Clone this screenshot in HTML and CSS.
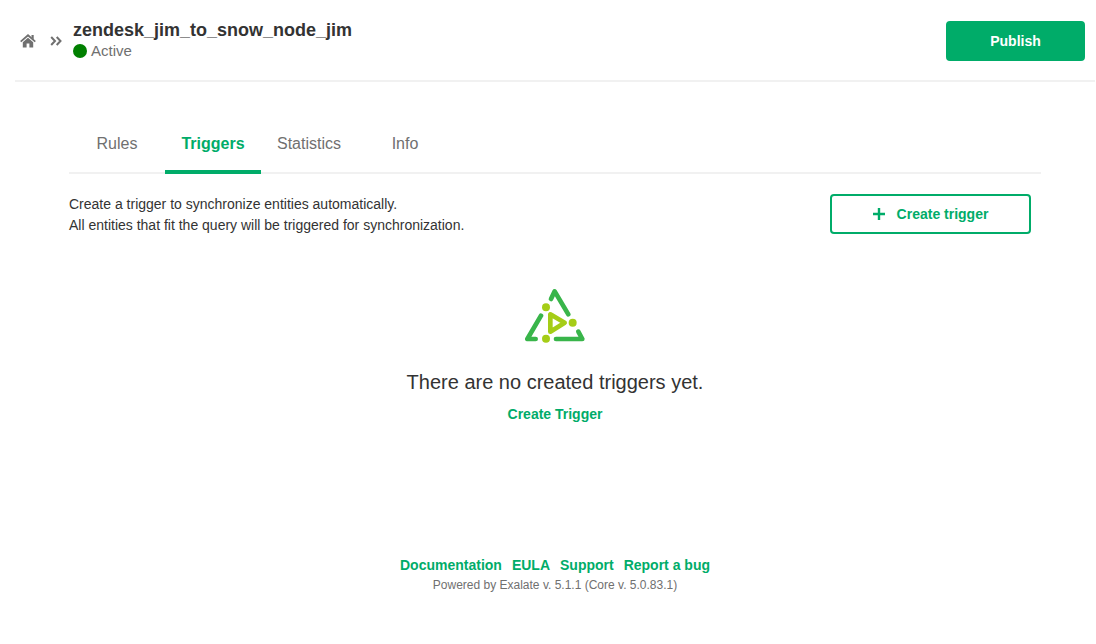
FILE: index.html
```html
<!DOCTYPE html>
<html lang="en">
  <head>
    <meta charset="UTF-8" />
    <meta name="viewport" content="width=device-width, initial-scale=1.0" />
    <title>zendesk_jim_to_snow_node_jim</title>
    <link rel="stylesheet" href="styles.css">
  </head>
  <body>
    <header class="header">
      <nav class="breadcrumbs" aria-label="Breadcrumb">
        <a href="#" class="home-link" aria-label="Home">
          <svg class="home-icon" viewBox="0 0 16 14" aria-hidden="true">
            <path d="M.7 7.6 8 1.3l7.3 6.3" fill="none" stroke="currentColor" stroke-width="1.8" />
            <path d="M11.5 1h2.2v4.5l-2.2-2z" fill="currentColor" />
            <path d="M8 3.7 2.8 8.2V13.5H6.6V9.5H9.4v4H13.2V8.2z" fill="currentColor" />
          </svg>
        </a>
        <svg class="chevrons" viewBox="0 0 12 10" aria-hidden="true">
          <path d="M1.2 1 5 5 1.2 9M6.7 1 10.5 5 6.7 9" fill="none" stroke="currentColor" stroke-width="2" />
        </svg>
      </nav>
      <div class="connection">
        <h1 class="connection-name">zendesk_jim_to_snow_node_jim</h1>
        <p class="status"><span class="status-dot"></span>Active</p>
      </div>
      <button type="button" class="btn btn-primary">Publish</button>
    </header>

    <main class="content">
      <nav class="tabs">
        <a href="#" class="tab">Rules</a>
        <a href="#" class="tab active" aria-current="page">Triggers</a>
        <a href="#" class="tab">Statistics</a>
        <a href="#" class="tab">Info</a>
      </nav>

      <section class="intro">
        <p>
          Create a trigger to synchronize entities automatically.<br>
          All entities that fit the query will be triggered for synchronization.
        </p>
        <button type="button" class="btn btn-outline">
          <svg class="plus-icon" viewBox="0 0 12 12" aria-hidden="true">
            <path d="M6 0v12M0 6h12" fill="none" stroke="currentColor" stroke-width="2.4" />
          </svg>
          Create trigger
        </button>
      </section>

      <section class="empty-state">
        <svg class="trigger-logo" viewBox="45 25 180 165" aria-hidden="true">
          <g class="logo-frame">
            <path d="M123 58 134 35 175 104" />
            <path d="M93 108 52 178H77" />
            <path d="M138 178H217L205 156" />
          </g>
          <path class="logo-play" d="M121 104V156L164 129Z" />
          <g class="logo-dots">
            <circle cx="108" cy="83" r="12" />
            <circle cx="188" cy="129" r="12" />
            <circle cx="108" cy="177" r="12" />
          </g>
        </svg>
        <h2 class="empty-title">There are no created triggers yet.</h2>
        <a href="#" class="link">Create Trigger</a>
      </section>
    </main>

    <footer class="footer">
      <nav class="footer-links">
        <a href="#" class="link">Documentation</a>
        <a href="#" class="link">EULA</a>
        <a href="#" class="link">Support</a>
        <a href="#" class="link">Report a bug</a>
      </nav>
      <p class="version">Powered by Exalate v. 5.1.1 (Core v. 5.0.83.1)</p>
    </footer>
  </body>
</html>
```
FILE: styles.css
```css
*,
*::before,
*::after {
  margin: 0;
  padding: 0;
  box-sizing: border-box;
}

:root {
  --green: #00ac69;
  --text: #333333;
  --muted: #707070;
  --line: #f1f1f1;
}

body {
  padding: 0 1px 0 15px;
  background-color: #ffffff;
  color: var(--text);
  font-family: "Liberation Sans", Arial, sans-serif;
  font-size: 14px;
  line-height: 21px;
}

a {
  text-decoration: none;
}

/* Header */
.header {
  display: flex;
  align-items: center;
  height: 82px;
  padding: 2px 10px 0 5px;
  border-bottom: 2px solid var(--line);
}

.breadcrumbs {
  display: flex;
  align-items: center;
  gap: 14px;
  margin-right: 11px;
  color: var(--muted);
}

.home-link {
  display: flex;
  color: inherit;
}

.home-icon {
  width: 16px;
  height: 14px;
}

.chevrons {
  width: 12px;
  height: 10px;
}

.connection {
  flex: 1;
  padding-bottom: 2px;
}

.connection-name {
  font-size: 18px;
  line-height: 21px;
}

.status {
  display: flex;
  align-items: center;
  gap: 4px;
  color: var(--muted);
  font-size: 15px;
  line-height: 20px;
}

.status-dot {
  width: 14px;
  height: 14px;
  border-radius: 50%;
  background-color: #008000;
}

/* Buttons */
.btn {
  display: flex;
  align-items: center;
  justify-content: center;
  height: 40px;
  padding: 0 40px;
  border: 2px solid var(--green);
  border-radius: 4px;
  font-family: inherit;
  font-size: 14px;
  font-weight: bold;
  cursor: pointer;
}

.btn-primary {
  min-width: 139px;
  background-color: var(--green);
  color: #ffffff;
}

.btn-outline {
  gap: 12px;
  min-width: 201px;
  background-color: #ffffff;
  color: var(--green);
}

.plus-icon {
  width: 12px;
  height: 12px;
}

/* Content */
.content {
  padding: 32px 54px 0;
}

.tabs {
  display: flex;
  height: 60px;
  box-shadow: inset 0 -2px var(--line);
}

.tab {
  width: 96px;
  padding-top: 19px;
  color: var(--muted);
  font-size: 16px;
  text-align: center;
}

.tab.active {
  border-bottom: 4px solid var(--green);
  color: var(--green);
  font-weight: bold;
}

.intro {
  display: flex;
  align-items: flex-start;
  justify-content: space-between;
  padding: 20px 10px 0 0;
}

/* Empty state */
.empty-state {
  display: flex;
  flex-direction: column;
  align-items: center;
  padding: 52px 0 130px;
}

.trigger-logo {
  width: 60px;
  height: 55px;
}

.logo-frame,
.logo-play {
  fill: none;
  stroke: #39b54a;
  stroke-width: 14;
  stroke-linecap: round;
  stroke-linejoin: round;
}

.logo-play {
  stroke: #a5cd17;
}

.logo-dots {
  fill: #a5cd17;
}

.empty-title {
  margin: 26px 0 9px;
  font-size: 20px;
  font-weight: normal;
  line-height: 26px;
}

.link {
  color: var(--green);
  font-weight: bold;
}

.link:hover {
  text-decoration: underline;
}

/* Footer */
.footer {
  text-align: center;
}

.footer-links {
  display: flex;
  justify-content: center;
  gap: 10px;
}

.version {
  color: var(--muted);
  font-size: 12px;
  line-height: 18px;
}
```
